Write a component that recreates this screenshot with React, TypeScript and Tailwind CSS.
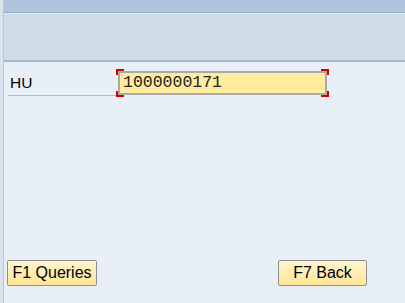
import React from 'react';

const Corner = ({ pos }: { pos: string }) => (
  <span className={`absolute w-[8px] h-[6px] border-[#d40000] ${pos}`} />
);

const FKey = ({ label, width }: { label: string; width: string }) => (
  <button
    className={`h-[26px] ${width} px-[4px] rounded-[2px] border border-[#8f8f8f] bg-gradient-to-b from-[#fff6cf] to-[#ffe594] text-[16px] text-black leading-none`}
  >
    {label}
  </button>
);

export default function App() {
  return (
    <div className="w-[405px] h-[303px] flex bg-[#e8eff7] font-['Liberation_Sans',Arial,sans-serif] overflow-hidden">
      <div className="w-[3px] bg-[#dbe4ee] border-r border-[#b9c7d5] box-content" />
      <div className="flex-1 flex flex-col">
        {/* header bars */}
        <div className="h-[12px] bg-[#adc4dc] border-b border-[#97aec6] box-content" />
        <div className="h-[46px] bg-[#cfdce7] border-t border-[#e3ebf2] border-b-2 border-b-[#a6b7c7] box-content" />

        {/* body */}
        <div className="flex-1 flex flex-col">
          <div className="flex items-center mt-[9px] ml-[4px] h-[24px]">
            <div className="w-[110px] h-[25px] flex items-end border-b border-[#b3bac2] pl-[2px] pb-[4px]">
              <span className="text-[15.5px] text-black leading-none">HU</span>
            </div>
            <div className="relative">
              <Corner pos="-left-[2px] -top-[2px] border-l-2 border-t-2" />
              <Corner pos="-right-[2px] -top-[2px] border-r-2 border-t-2" />
              <Corner pos="-left-[2px] -bottom-[2px] border-l-2 border-b-2" />
              <Corner pos="-right-[2px] -bottom-[2px] border-r-2 border-b-2" />
              <div className="w-[209px] h-[24px] bg-[#ffec9f] border-2 border-[#a9a9a9] flex items-center pl-[3px]">
                <span className="font-['Liberation_Mono',monospace] text-[16.5px] text-[#222] leading-none">
                  1000000171
                </span>
              </div>
            </div>
          </div>

          <div className="flex-1" />

          <div className="flex items-center justify-between pl-[3px] pr-[38px] pb-[17px]">
            <FKey label="F1 Queries" width="w-[90px]" />
            <FKey label="F7 Back" width="w-[89px]" />
          </div>
        </div>
      </div>
    </div>
  );
}
